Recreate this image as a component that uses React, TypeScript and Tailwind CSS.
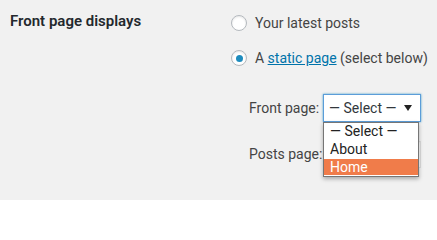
import React from "react";

export default function App() {
  return (
    <div className="relative w-[437px] h-[200px] bg-[#f1f1f1] font-['Roboto',sans-serif] text-[14px] text-[#444] flex pl-[10px] overflow-hidden">
      <div className="w-[221px] pt-[11px] leading-[20px] text-[15px] font-semibold text-[#23282d]">
        Front page displays
      </div>
      <div className="flex flex-col pt-[13px]">
        <label className="flex items-center h-[20px] gap-[8px]">
          <span className="w-[16px] h-[16px] rounded-full border border-[#b4b9be] bg-white shadow-[inset_0_1px_2px_rgba(0,0,0,0.1)]" />
          <span>Your latest posts</span>
        </label>
        <label className="flex items-center h-[20px] gap-[8px] mt-[15px]">
          <span className="w-[16px] h-[16px] rounded-full border border-[#b4b9be] bg-white shadow-[inset_0_1px_2px_rgba(0,0,0,0.1)] flex items-center justify-center">
            <span className="w-[7px] h-[7px] rounded-full bg-[#1e8cbe]" />
          </span>
          <span>
            A <span className="text-[#0073aa] underline">static page</span> (select below)
          </span>
        </label>
        <div className="flex items-center gap-[4px] ml-[18px] mt-[26px]">
          <span>Front page:</span>
          <div className="relative">
            <div className="w-[98px] h-[28px] border border-[#5b9dd9] bg-white shadow-[0_0_2px_rgba(30,140,190,0.8)] flex items-center justify-between pl-[5px] pr-[8px] text-[#32373c]">
              <span>— Select —</span>
              <svg width="8" height="6" viewBox="0 0 8 6"><path d="M0 0h8L4 6z" fill="#222" /></svg>
            </div>
            <div className="absolute left-0 top-[28px] w-[96px] z-10 border border-[#767676] bg-white shadow-[0_2px_4px_rgba(0,0,0,0.3)] pb-[1px] text-[#222]">
              <div className="h-[18px] leading-[16px] pl-[6px]">— Select —</div>
              <div className="h-[18px] leading-[16px] pl-[6px]">About</div>
              <div className="h-[16px] leading-[16px] pl-[6px] bg-[#f07c4a] text-white">Home</div>
            </div>
          </div>
        </div>
        <div className="flex items-center gap-[4px] ml-[18px] mt-[19px]">
          <span>Posts page:</span>
          <div className="w-[95px] h-[27px] border border-[#ddd] bg-white shadow-[inset_0_1px_2px_rgba(0,0,0,0.07)]" />
        </div>
      </div>
    </div>
  );
}
